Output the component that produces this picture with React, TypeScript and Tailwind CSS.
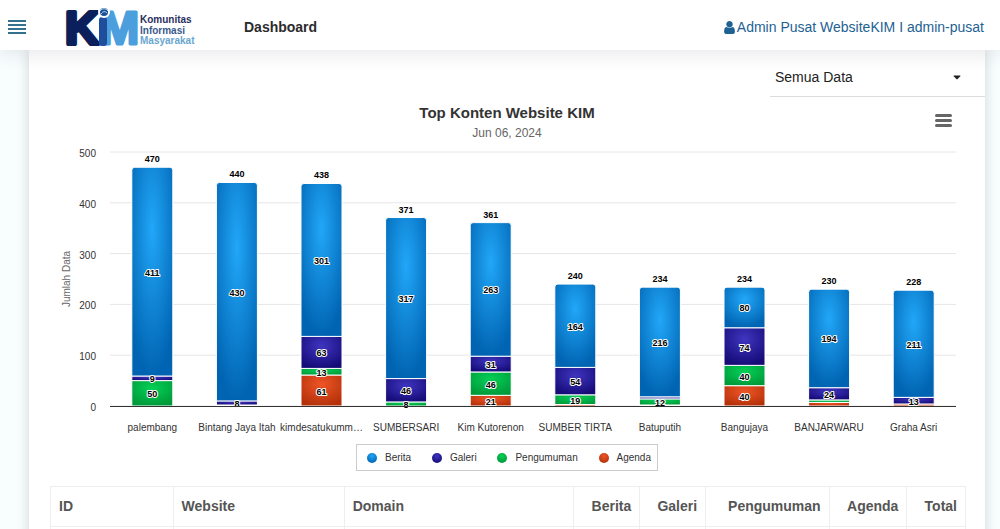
import { FaCaretDown } from "react-icons/fa";

interface SiteStats {
  name: string;
  berita: number;
  galeri: number;
  pengumuman: number;
  agenda: number;
}

type SeriesKey = "berita" | "galeri" | "pengumuman" | "agenda";

const SITES: SiteStats[] = [
  { name: "palembang", berita: 411, galeri: 9, pengumuman: 50, agenda: 0 },
  { name: "Bintang Jaya Itah", berita: 430, galeri: 8, pengumuman: 2, agenda: 0 },
  { name: "kimdesatukumm…", berita: 301, galeri: 63, pengumuman: 13, agenda: 61 },
  { name: "SUMBERSARI", berita: 317, galeri: 46, pengumuman: 8, agenda: 0 },
  { name: "Kim Kutorenon", berita: 263, galeri: 31, pengumuman: 46, agenda: 21 },
  { name: "SUMBER TIRTA", berita: 164, galeri: 54, pengumuman: 19, agenda: 3 },
  { name: "Batuputih", berita: 216, galeri: 4, pengumuman: 12, agenda: 2 },
  { name: "Bangujaya", berita: 80, galeri: 74, pengumuman: 40, agenda: 40 },
  { name: "BANJARWARU", berita: 194, galeri: 24, pengumuman: 5, agenda: 7 },
  { name: "Graha Asri", berita: 211, galeri: 13, pengumuman: 0, agenda: 4 },
];

const SERIES: { key: SeriesKey; label: string; from: string; to: string }[] = [
  { key: "berita", label: "Berita", from: "#22a7f8", to: "#0064b2" },
  { key: "galeri", label: "Galeri", from: "#3f35c0", to: "#160c78" },
  { key: "pengumuman", label: "Pengumuman", from: "#04cf56", to: "#009a3a" },
  { key: "agenda", label: "Agenda", from: "#ee5526", to: "#b5310a" },
];

// bottom of the stack first
const STACK = [...SERIES].reverse();

// segments smaller than this carry no label
const MIN_LABEL = 8;

const PLOT = { left: 81, right: 927, top: 12, bottom: 266, max: 500 };
const BAR_WIDTH = 41;

const scaleY = (value: number) =>
  PLOT.bottom - (value / PLOT.max) * (PLOT.bottom - PLOT.top);

function Logo() {
  return (
    <svg width="134" height="50" viewBox="0 0 134 50" className="overflow-visible" role="img" aria-label="KIM Komunitas Informasi Masyarakat">
      <g fontFamily="Liberation Sans, sans-serif" fontWeight="700" strokeLinejoin="round">
        <text x="38" y="44" fontSize="47" strokeWidth="3" fill="#4c9fdc" stroke="#4c9fdc">M</text>
        <text x="3" y="44" fontSize="47" strokeWidth="4" fill="#0a1f5c" stroke="#0a1f5c">K</text>
      </g>
      <rect x="37" y="17" width="8" height="29" rx="3" fill="#1f4f9c" />
      <circle cx="42" cy="12" r="6" fill="#fff" />
      <circle cx="42" cy="12" r="4" fill="#1c4f94" />
      <path d="M38 11c2-3 6-3 8 0M39 14c2-3 4-3 6-1" fill="none" stroke="#b8dcf5" />
      <g fontFamily="Liberation Sans, sans-serif" fontWeight="700" fontSize="10">
        <text x="78" y="23" fill="#2b2f5e">Komunitas</text>
        <text x="78" y="34" fill="#3a5a8c">Informasi</text>
        <text x="78" y="44" fill="#6ba6cf">Masyarakat</text>
      </g>
    </svg>
  );
}

function UserIcon() {
  return (
    <svg width="11" height="13" viewBox="0 128 1280 1536" fill="currentColor" aria-hidden="true">
      <path d="M1280 1399q0 109-62.5 187T1067 1664H213q-88 0-150.5-78T0 1399q0-85 8.5-160.5t31.5-152T98.500 955t94-89T327 832q131 128 313 128t313-128q76 0 134.500 34.500t94 89 58.500 131.500 31.500 152 8.500 160zM1024 512q0 159-112.500 271.500T640 896 368.500 783.500 256 512t112.500-271.500T640 128t271.500 112.500T1024 512z" />
    </svg>
  );
}

function TopBar() {
  return (
    <header className="relative z-10 flex h-[50px] shrink-0 items-center bg-white pr-4 pl-2 shadow-[0_2px_20px_rgba(60,60,80,0.14)]">
      <button type="button" aria-label="Menu" className="flex w-[18px] flex-col gap-[2px] pt-[3px]">
        <span className="h-[2px] bg-[#34718f]" />
        <span className="h-[2px] bg-[#34718f]" />
        <span className="h-[2px] bg-[#34718f]" />
        <span className="h-[2px] bg-[#34718f]" />
      </button>
      <a href="#" className="ml-9">
        <Logo />
      </a>
      <h1 className="ml-12 pt-1 text-[14px] font-bold text-[#2b2b2b]">Dashboard</h1>
      <a href="#" className="ml-auto flex items-center gap-[2px] pt-1 text-[14px] text-[#1d6293]">
        <UserIcon />
        Admin Pusat WebsiteKIM I admin-pusat
      </a>
    </header>
  );
}

function StackedBar({ site, index }: { site: SiteStats; index: number }) {
  const step = (PLOT.right - PLOT.left) / SITES.length;
  const center = PLOT.left + step * (index + 0.5);
  const x = center - BAR_WIDTH / 2;
  let sum = 0;
  const segments = STACK.map((series) => {
    const value = site[series.key];
    const bottom = scaleY(sum);
    sum += value;
    return { ...series, value, top: scaleY(sum), bottom };
  }).filter((segment) => segment.value > 0);

  return (
    <g>
      {segments.map(({ key, top, bottom }) =>
        key === "berita" ? (
          <path
            key={key}
            d={`M${x} ${bottom}V${top + 3}q0 -3 3 -3h${BAR_WIDTH - 6}q3 0 3 3V${bottom}z`}
            fill={`url(#fill-${key})`}
            stroke="#fff"
          />
        ) : (
          <rect key={key} x={x} y={top} width={BAR_WIDTH} height={bottom - top} fill={`url(#fill-${key})`} stroke="#fff" />
        ),
      )}
      <g fontSize="9" fontWeight="700" textAnchor="middle" fill="#000">
        {segments
          .filter(({ value }) => value >= MIN_LABEL)
          .map(({ key, value, top, bottom }) => (
            <text key={key} x={center} y={(top + bottom) / 2 + 4} stroke="#fff" strokeWidth="2" strokeLinejoin="round" paintOrder="stroke">
              {value}
            </text>
          ))}
        <text x={center} y={scaleY(sum) - 5}>{sum}</text>
      </g>
      <text x={center} y="291" fontSize="10" textAnchor="middle" fill="#333">
        {site.name}
      </text>
    </g>
  );
}

function StackedChart() {
  return (
    <svg viewBox="0 0 956 296" className="block w-full" fontFamily="Liberation Sans, Arial, sans-serif">
      <defs>
        {SERIES.map(({ key, from, to }) => (
          <radialGradient key={key} id={`fill-${key}`} cx="0.5" cy="0.3" r="0.7">
            <stop offset="0" stopColor={from} />
            <stop offset="1" stopColor={to} />
          </radialGradient>
        ))}
      </defs>
      {[0, 100, 200, 300, 400, 500].map((tick) => (
        <g key={tick}>
          <path d={`M${PLOT.left} ${scaleY(tick)}H${PLOT.right}`} stroke="#e6e6e6" />
          <text x="67" y={scaleY(tick) + 5} fontSize="10" textAnchor="end" fill="#333">
            {tick}
          </text>
        </g>
      ))}
      <text transform="translate(41 139) rotate(-90)" fontSize="10" textAnchor="middle" fill="#666">
        Jumlah Data
      </text>
      {SITES.map((site, index) => (
        <StackedBar key={site.name} site={site} index={index} />
      ))}
      <path d={`M${PLOT.left} ${PLOT.bottom + 0.5}H${PLOT.right}`} stroke="#333" />
    </svg>
  );
}

function Legend() {
  return (
    <div className="mx-auto mt-2 flex h-[27px] w-[302px] items-center justify-between border border-[#ccc] pr-[6px] pl-[10px]">
      {SERIES.map(({ key, label }) => (
        <button key={key} type="button" className="flex items-center gap-2 text-[10px] text-[#333]">
          <svg width="10" height="10" viewBox="0 0 10 10">
            <circle cx="5" cy="5" r="5" fill={`url(#fill-${key})`} />
          </svg>
          {label}
        </button>
      ))}
    </div>
  );
}

function StatsTable() {
  const cell = "border border-[#eee] px-2";
  return (
    <table className="w-full table-fixed border-collapse text-[14px] text-[#555]">
      <colgroup>
        <col className="w-[13.4%]" />
        <col className="w-[18.7%]" />
        <col className="w-[25.1%]" />
        <col className="w-[7.2%]" />
        <col className="w-[7.2%]" />
        <col className="w-[13.5%]" />
        <col className="w-[8.5%]" />
        <col className="w-[6.4%]" />
      </colgroup>
      <thead>
        <tr className="h-10">
          {["ID", "Website", "Domain"].map((label) => (
            <th key={label} className={`${cell} text-left`}>{label}</th>
          ))}
          {["Berita", "Galeri", "Pengumuman", "Agenda", "Total"].map((label) => (
            <th key={label} className={`${cell} text-right`}>{label}</th>
          ))}
        </tr>
      </thead>
      <tbody>
        <tr className="h-10">
          {["id", "website", "domain", ...SERIES.map(({ key }) => key), "total"].map((column) => (
            <td key={column} className={cell} />
          ))}
        </tr>
      </tbody>
    </table>
  );
}

export default function App() {
  return (
    <div className="flex h-screen flex-col overflow-hidden bg-[#f8fdfe] font-['Liberation_Sans',Arial,sans-serif]">
      <TopBar />
      <main className="min-h-0 flex-1 overflow-hidden pr-[15px] pl-[29px]">
        <section className="min-h-full bg-white shadow-[0_0_12px_rgba(0,0,0,0.16)]">
          <div className="flex justify-end pt-2">
            <div className="relative w-[215px]">
              <select
                aria-label="Semua Data"
                className="h-[39px] w-full appearance-none border-b border-[#ddd] bg-transparent px-[5px] text-[14px] text-[#222]"
              >
                <option>Semua Data</option>
              </select>
              <FaCaretDown className="pointer-events-none absolute top-[13px] right-[22px] size-3 text-[#222]" />
            </div>
          </div>
          <div className="relative h-[43px] pt-[6px] text-center">
            <h2 className="text-[15px] leading-[20px] font-bold text-[#333]">Top Konten Website KIM</h2>
            <p className="text-[12px] leading-[20px] text-[#666]">Jun 06, 2024</p>
            <button type="button" aria-label="Chart menu" className="absolute top-[17px] right-[33px] flex w-[17px] flex-col gap-[2px]">
              <span className="h-[3px] rounded-full bg-[#666]" />
              <span className="h-[3px] rounded-full bg-[#666]" />
              <span className="h-[3px] rounded-full bg-[#666]" />
            </button>
          </div>
          <StackedChart />
          <Legend />
          <div className="pt-[15px] pr-[19px] pl-[21px]">
            <StatsTable />
          </div>
        </section>
      </main>
    </div>
  );
}
